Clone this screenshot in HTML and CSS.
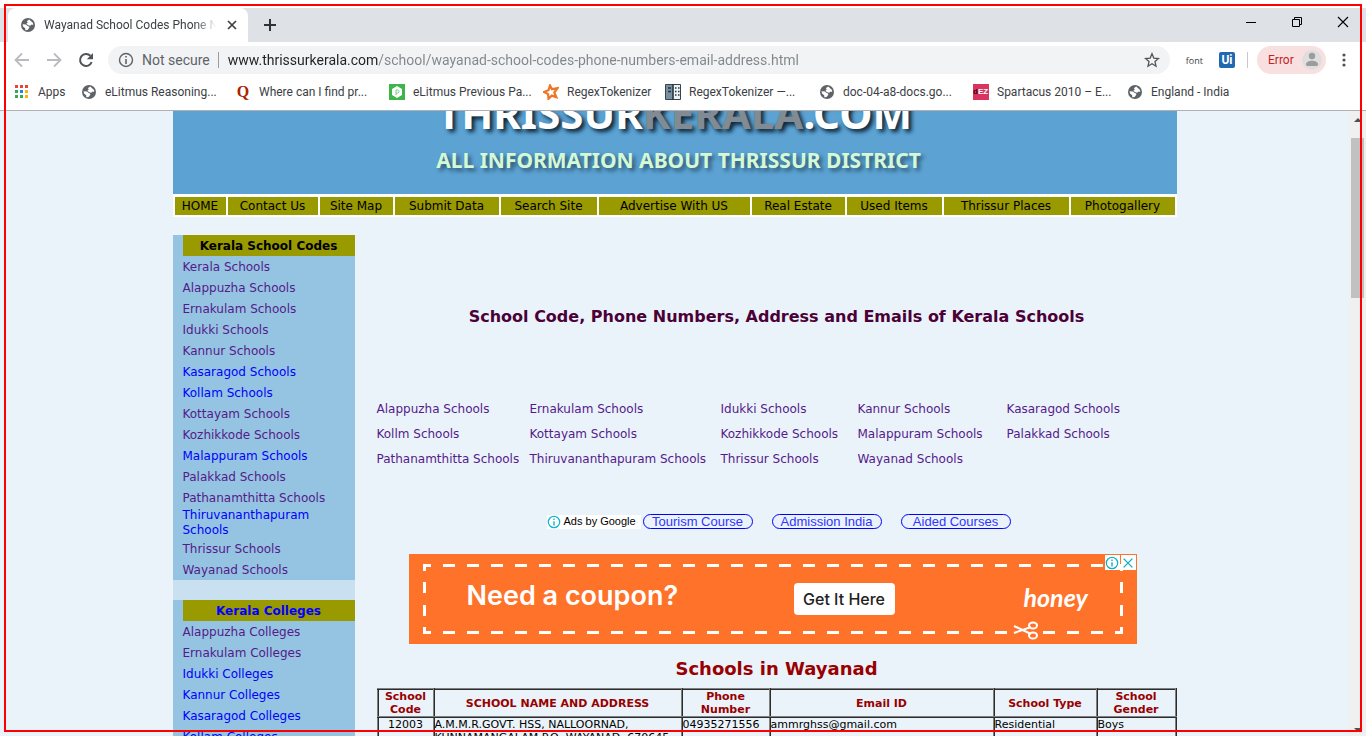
FILE: index.html
```html
<!DOCTYPE html>
<html lang="en">
<head>
<meta charset="utf-8">
<title>Wayanad School Codes Phone Numbers</title>
<link rel="stylesheet" href="styles.css">
</head>
<body>
<svg class="defs" aria-hidden="true">
  <symbol id="globe" viewBox="0 0 16 16"><circle cx="8" cy="8" r="7" fill="#5f6368"/><path d="M9.2 2.6 13 6l.2 2-1.6-.4-1.4 1.2-2-.6L6.400 6.800 7.900 5.300 6.700 4.200zM2.600 7.300l3.400.3 1.700 1.500 1.400.3.200 1.400L7.600 12.900 5.300 13.200 5.200 11.300 3 9.400z" fill="#fff"/></symbol>
  <symbol id="info" viewBox="0 0 16 16"><circle cx="8" cy="8" r="6.500" fill="none" stroke="currentColor" stroke-width="1.400"/><path d="M8 7v5M8 4v1.600" stroke="currentColor" stroke-width="1.600"/></symbol>
</svg>
<div class="window">
  <div class="tabstrip">
    <div class="tab">
      <svg class="icon"><use href="#globe"/></svg>
      <span class="tab-title">Wayanad School Codes Phone Nu</span>
      <button class="plain" aria-label="Close tab"><svg class="icon" viewBox="0 0 16 16"><path d="m4 4 8 8m0-8-8 8" stroke="#3c4043" stroke-width="1.700"/></svg></button>
    </div>
    <button class="plain new-tab" aria-label="New tab"><svg class="icon" viewBox="0 0 16 16"><path d="M8 2v12M2 8h12" stroke="#303336" stroke-width="2"/></svg></button>
    <div class="controls">
      <button class="plain" aria-label="Minimize"><svg class="icon" viewBox="0 0 16 16"><path d="M3 8.500h10" stroke="#000"/></svg></button>
      <button class="plain" aria-label="Restore"><svg class="icon" viewBox="0 0 16 16"><path d="M3.500 5.500h7v7h-7zM5.500 5.500v-2h7v7h-2" fill="none" stroke="#000"/></svg></button>
      <button class="plain" aria-label="Close"><svg class="icon" viewBox="0 0 16 16"><path d="m3 3 10 10m0-10L3 13" stroke="#000" stroke-width="1.100"/></svg></button>
    </div>
  </div>
  <div class="toolbar">
    <button class="plain" aria-label="Back"><svg class="icon" viewBox="0 0 16 16"><path d="M15 8H2m6-6.500L1.500 8 8 14.500" fill="none" stroke="#b9bbbe" stroke-width="1.800"/></svg></button>
    <button class="plain" aria-label="Forward"><svg class="icon" viewBox="0 0 16 16"><path d="M1 8h13M8 1.500 14.500 8 8 14.500" fill="none" stroke="#b9bbbe" stroke-width="1.800"/></svg></button>
    <button class="plain" aria-label="Reload"><svg class="icon" viewBox="0 0 16 16"><path d="M13.700 10A6 6 0 1 1 12.400 3.800" fill="none" stroke="#505357" stroke-width="2"/><path d="M15 1v6.200H8.800z" fill="#505357"/></svg></button>
    <div class="omnibox">
      <svg class="icon"><use href="#info"/></svg>
      <label class="secure" for="url">Not secure</label>
      <input id="url" class="url" type="text" value="www.thrissurkerala.com/school/wayanad-school-codes-phone-numbers-email-address.html">
      <button class="plain" aria-label="Bookmark"><svg class="icon" viewBox="0 0 16 16"><path d="m8 1.800 1.800 4.300 4.700.4-3.500 3.100 1 4.600L8 11.800l-4 2.400 1-4.600L1.500 6.500l4.700-.4z" fill="none" stroke="#505357" stroke-width="1.300"/></svg></button>
    </div>
    <button class="plain ext">font</button>
    <button class="plain ui">Ui</button>
    <span class="rule"></span>
    <button class="plain profile">Error <svg class="avatar" viewBox="0 0 20 20"><circle cx="10" cy="10" r="10" fill="#dedede"/><circle cx="10" cy="6" r="3.200" fill="#9c9c9c"/><path d="M4 14.500c0-5 12-5 12 0 0 1-1 1.500-2 1.500H6c-1 0-2-.5-2-1.500z" fill="#9c9c9c"/></svg></button>
    <button class="plain menu" aria-label="Menu"><svg class="icon" viewBox="0 0 16 16" fill="#505357"><circle cx="8" cy="3" r="1.600"/><circle cx="8" cy="8" r="1.600"/><circle cx="8" cy="13" r="1.600"/></svg></button>
  </div>
  <nav class="bookmarks" aria-label="Bookmarks">
    <a href="#"><svg class="icon" viewBox="0 0 16 16"><path d="M1 1h3v3H1zM6 1h3v3H6zM11 1h3v3h-3z" fill="#ea4335"/><path d="M1 6h3v3H1zM1 11h3v3H1zM6 11h3v3H6z" fill="#34a853"/><path d="M6 6h3v3H6z" fill="#1a83f0"/><path d="M11 6h3v3h-3zM11 11h3v3h-3z" fill="#fbb405"/></svg>Apps</a>
    <a href="#"><svg class="icon"><use href="#globe"/></svg>eLitmus Reasoning...</a>
    <a href="#"><span class="icon quora">Q</span>Where can I find pr...</a>
    <a href="#"><svg class="icon" viewBox="0 0 16 16"><path d="M0 0h16v16H0z" fill="#3cb54a"/><path d="m8 2 5 3v6l-5 3-5-3V5z" fill="#fff"/><path d="M7 11V6h1.500a1.500 1.500 0 0 1 0 3H7" fill="none" stroke="#7ccc84"/></svg>eLitmus Previous Pa...</a>
    <a href="#"><svg class="icon" viewBox="0 0 16 16"><path d="m7 1.500 2 3.700 5.500-1-3.200 4.300 2 4.700-4.500-1.600-3.300 3.200-.4-4.700L1 8l4.500-1.800z" fill="none" stroke="#ee7426" stroke-width="2.200"/></svg>RegexTokenizer</a>
    <a href="#"><svg class="icon" viewBox="0 0 16 16"><path d="M.5.500h15v15H.5z" fill="#788fa1" stroke="#34434f"/><path d="M8 1h7v14H8z" fill="#eef2f4"/><path d="M8 0v16M3 4h3M3 7.500h3M10 4h1.500M13 4h1.500M10 7.500h1.500M13 7.500h1.500M10 11h1.500M13 11h1.500" stroke="#263641" stroke-width="1.600"/></svg>RegexTokenizer —...</a>
    <a href="#"><svg class="icon"><use href="#globe"/></svg>doc-04-a8-docs.go...</a>
    <a href="#"><span class="icon dez"><i>d</i>EZ</span>Spartacus 2010 – E...</a>
    <a href="#"><svg class="icon"><use href="#globe"/></svg>England - India</a>
  </nav>
  <div class="viewport">
    <div class="page">
      <div class="site">
        <header class="masthead">
          <div class="title">THRISSUR<span>KERALA</span>.COM</div>
          <div class="tagline">ALL INFORMATION ABOUT THRISSUR DISTRICT</div>
        </header>
        <nav class="mainnav">
          <a href="#">HOME</a><a href="#">Contact Us</a><a href="#">Site Map</a><a href="#">Submit Data</a><a href="#">Search Site</a><a href="#">Advertise With US</a><a href="#">Real Estate</a><a href="#">Used Items</a><a href="#">Thrissur Places</a><a href="#">Photogallery</a>
        </nav>
        <div class="columns">
          <aside class="sidebar">
            <section>
              <h2>Kerala School Codes</h2>
              <a class="seen" href="#">Kerala Schools</a>
              <a class="seen" href="#">Alappuzha Schools</a>
              <a class="seen" href="#">Ernakulam Schools</a>
              <a class="seen" href="#">Idukki Schools</a>
              <a class="seen" href="#">Kannur Schools</a>
              <a href="#">Kasaragod Schools</a>
              <a href="#">Kollam Schools</a>
              <a class="seen" href="#">Kottayam Schools</a>
              <a class="seen" href="#">Kozhikkode Schools</a>
              <a href="#">Malappuram Schools</a>
              <a class="seen" href="#">Palakkad Schools</a>
              <a class="seen" href="#">Pathanamthitta Schools</a>
              <a class="two" href="#">Thiruvananthapuram<br>Schools</a>
              <a class="seen" href="#">Thrissur Schools</a>
              <a class="seen" href="#">Wayanad Schools</a>
            </section>
            <section>
              <h2 class="blue">Kerala Colleges</h2>
              <a class="seen" href="#">Alappuzha Colleges</a>
              <a class="seen" href="#">Ernakulam Colleges</a>
              <a href="#">Idukki Colleges</a>
              <a href="#">Kannur Colleges</a>
              <a href="#">Kasaragod Colleges</a>
              <a href="#">Kollam Colleges</a>
            </section>
          </aside>
          <main class="main">
            <h1>School Code, Phone Numbers, Address and Emails of Kerala Schools</h1>
            <div class="districts">
              <a href="#">Alappuzha Schools</a><a href="#">Ernakulam Schools</a><a href="#">Idukki Schools</a><a href="#">Kannur Schools</a><a href="#">Kasaragod Schools</a>
              <a href="#">Kollm Schools</a><a href="#">Kottayam Schools</a><a href="#">Kozhikkode Schools</a><a href="#">Malappuram Schools</a><a href="#">Palakkad Schools</a>
              <a href="#">Pathanamthitta Schools</a><a href="#">Thiruvananthapuram Schools</a><a href="#">Thrissur Schools</a><a href="#">Wayanad Schools</a>
            </div>
            <div class="adlinks">
              <span class="adsby"><svg viewBox="0 0 16 16"><use href="#info"/></svg>Ads by Google</span>
              <a href="#">Tourism Course</a><a href="#">Admission India</a><a href="#">Aided Courses</a>
            </div>
            <div class="banner">
              <svg class="dashes" viewBox="0 0 728 90" fill="none" stroke="#fff" stroke-width="3">
                <path d="M34 11.500h670" stroke-dasharray="12"/>
                <path d="M34 78.500h568M634 78.500h70" stroke-dasharray="12"/>
                <path d="M15.500 28v36M712.500 28v36" stroke-dasharray="11 12"/>
                <path d="M22 11.500h-6.500V17M22 78.500h-6.500V73M706 78.500h6.500V73M706 11.500h6.500V17"/>
                <g stroke-width="2"><path d="m605 72 17 8M605 79l17-6"/><ellipse cx="624" cy="71.500" rx="4" ry="3"/><ellipse cx="624" cy="81.500" rx="4" ry="3"/></g>
              </svg>
              <span class="coupon">Need a coupon?</span>
              <button class="plain get">Get It Here</button>
              <span class="honey">honey</span>
              <span class="choices">
                <button class="plain" aria-label="Ad information"><svg viewBox="0 0 16 16"><use href="#info"/></svg></button>
                <button class="plain" aria-label="Close ad"><svg viewBox="0 0 16 16"><path d="m3 3 10 10m0-10L3 13" stroke="currentColor" stroke-width="1.600"/></svg></button>
              </span>
            </div>
            <h2>Schools in Wayanad</h2>
            <table>
              <colgroup><col class="c1"><col class="c2"><col class="c3"><col class="c4"><col class="c5"><col class="c6"></colgroup>
              <thead><tr><th>School Code</th><th>SCHOOL NAME AND ADDRESS</th><th>Phone Number</th><th>Email ID</th><th>School Type</th><th>School Gender</th></tr></thead>
              <tbody><tr><td class="code">12003</td><td>A.M.M.R.GOVT. HSS, NALLOORNAD, KUNNAMANGALAM P.O, WAYANAD, 670645</td><td>04935271556</td><td>ammrghss@gmail.com</td><td>Residential</td><td>Boys</td></tr></tbody>
            </table>
          </main>
        </div>
      </div>
    </div>
    <div class="scrollbar"><span class="up"></span><span class="thumb"></span><span class="down"></span></div>
  </div>
  <div class="outline"></div>
</div>
</body>
</html>
```
FILE: styles.css
```css
* { box-sizing: border-box; }
body { margin: 0; font: 12px/15px "DejaVu Sans", Verdana, sans-serif; color: #000; }
a { text-decoration: none; color: #00f; }
h1, h2 { margin: 0; }
.defs { position: absolute; width: 0; height: 0; }
.plain { border: 0; padding: 0; background: none; font: inherit; color: inherit; display: flex; align-items: center; justify-content: center; }
.icon { width: 16px; height: 16px; flex: none; display: block; }

.window { position: relative; height: 100vh; overflow: hidden; display: flex; flex-direction: column; padding-top: 8px; background: #fff; }
.outline { position: absolute; inset: 4px; border: 2px solid #f00; pointer-events: none; }
.tabstrip, .toolbar, .bookmarks { flex: none; font-family: Roboto, "Open Sans", sans-serif; font-size: 12px; color: #3c4043; display: flex; align-items: center; }

.tabstrip { height: 34px; background: #dee1e6; padding-left: 8px; }
.tab { width: 240px; height: 34px; background: #fff; border-radius: 8px 8px 0 0; display: flex; align-items: center; padding: 0 8px 0 12px; gap: 8px; }
.tab-title { flex: 1; min-width: 0; overflow: hidden; white-space: nowrap; -webkit-mask-image: linear-gradient(to right, #000 88%, transparent); mask-image: linear-gradient(to right, #000 88%, transparent); }
.new-tab { margin-left: 14px; }
.controls { margin-left: auto; display: flex; gap: 30px; padding: 0 15px 6px 0; }

.toolbar { height: 36px; padding: 0 14px; gap: 16px; }
.omnibox { flex: 1; height: 28px; margin-left: -2px; border-radius: 14px; background: #f1f3f4; display: flex; align-items: center; padding: 0 10px; font-size: 14px; color: #5f6368; }
.secure { margin-left: 8px; padding-right: 8px; border-right: 1px solid #9a9da0; line-height: 16px; }
.url { flex: 1; min-width: 0; border: 0; padding: 0 0 0 9px; outline: 0; font: inherit; color: transparent; background: linear-gradient(to right, #202124 159px, #80868b 159px); -webkit-background-clip: text; background-clip: text; }
.ext { font: 9px "Open Sans", sans-serif; }
.ui { width: 16px; height: 16px; border-radius: 2px; background: #2068b0; color: #fff; font-weight: 700; }
.rule { width: 1px; height: 16px; background: #c6c8ca; margin: 0 -7px 0 -4px; }
.profile { width: 69px; height: 28px; border-radius: 14px; background: #f9e0e0; color: #c5221f; padding: 0 4px 0 11px; justify-content: space-between; }
.avatar { width: 20px; height: 20px; }
.menu { margin: 0 0 0 -6px; }

.bookmarks { height: 33px; padding: 0 14px 4px; border-bottom: 1px solid #b0b0b4; display: grid; grid-template-columns: 67px 154px 154px 154px 122px 154px 154px 154px 1fr; }
.bookmarks a { display: flex; align-items: center; gap: 8px; color: #3c4043; white-space: nowrap; }
.quora { font: bold 16px/16px "Liberation Serif", serif; color: #a82400; text-align: center; }
.dez { background: #d9345f; color: #fff; font: bold 8px/16px "Liberation Sans", sans-serif; }
.dez i { font-style: normal; color: #400; }

.viewport { flex: 1; min-height: 0; display: flex; }
.page { flex: 1; min-width: 0; overflow: hidden; background: #eaf3fa; }
.site { max-width: 1004px; margin: 0 auto; }
.masthead { height: 83px; overflow: hidden; background: #5ca3d4; text-align: center; font-family: "Noto Sans", sans-serif; font-weight: 700; white-space: nowrap; }
.title { margin-top: -26px; font-size: 42px; line-height: 56px; color: #fff; text-shadow: 3px 3px 4px #0c2233; }
.title span { color: #808b94; }
.tagline { font-size: 21px; line-height: 38px; color: #d5f8d5; text-shadow: 3px 3px 4px #2a506c; padding-left: 8px; }
.mainnav { background: #fff; padding: 3px 2px 2px; display: grid; gap: 2px; grid-template-columns: 51fr 90fr 73fr 104fr 96fr 151fr 93fr 95fr 125fr 104fr; }
.mainnav a { min-width: 0; background: #990; color: #000; text-align: center; line-height: 18px; white-space: nowrap; }

.columns { margin-top: 18px; display: flex; gap: 22px; }
.sidebar { width: 182px; flex: none; background: #c9e0f0; display: flex; flex-direction: column; gap: 20px; }
.sidebar section { background: #94c4e1; padding-left: 10px; }
.sidebar h2 { background: #990; font-size: 12px; line-height: 19px; padding: 2px 0 0; text-align: center; }
.sidebar .blue { color: #00f; }
.sidebar a { display: block; line-height: 19px; padding-top: 2px; white-space: nowrap; }
.sidebar .two { line-height: 15px; padding: 0; }
.sidebar .seen, .districts a { color: #551a8b; }

.main { flex: 1; min-width: 0; }
.main h1 { font-size: 16px; line-height: 20px; text-align: center; color: #4b0037; padding: 72px 0 70px; }
.districts { display: grid; grid-template-columns: 153px 191px 137px 149px 1fr; line-height: 25px; white-space: nowrap; }
.adlinks { margin-top: 42px; padding-left: 170px; display: flex; align-items: center; gap: 19px; font: 13px/15px "Liberation Sans", Arial, sans-serif; }
.adlinks a { width: 110px; height: 15px; line-height: 13px; border: 1px solid #00f; border-radius: 8px; text-align: center; color: #33f; }
.adsby { background: #fff; display: flex; align-items: center; gap: 3px; width: 94px; height: 14px; font-size: 11px; white-space: nowrap; margin-right: -17px; }
.adsby svg { width: 14px; height: 14px; color: #12b5cb; flex: none; }
.banner { position: relative; max-width: 728px; height: 90px; margin: 25px auto 0 32px; background: #ff7229; color: #fff; display: flex; align-items: center; padding: 0 48px 0 58px; font-family: Inter, sans-serif; }
.dashes { position: absolute; inset: 0; width: 100%; height: 100%; }
.coupon { font-size: 27px; line-height: 32px; font-weight: 600; padding-bottom: 6px; }
.get { width: 101px; height: 32px; margin-left: auto; border-radius: 4px; background: #fff; color: #222; font-size: 16px; font-weight: 500; }
.honey { margin-left: 129px; width: 65px; font: italic 700 25px/28px Lato, cursive; padding-bottom: 4px; }
.choices { position: absolute; top: 1px; right: 1px; display: flex; gap: 1px; color: #12aecb; }
.choices .plain { width: 15px; height: 15px; background: #fff; }
.choices svg { width: 14px; height: 14px; }
.main h2 { font-size: 18px; line-height: 24px; text-align: center; color: #900; padding: 13px 0 7px; }
table { width: 100%; table-layout: fixed; border-collapse: collapse; font-size: 11px; line-height: 13px; }
th, td { border: 2px ridge #808080; padding: 0; }
th { color: #900; }
td { vertical-align: top; }
.code { text-align: center; }
.c1 { width: 56px; } .c2 { width: 248px; } .c3 { width: 88px; } .c4 { width: 224px; } .c5 { width: 103px; } .c6 { width: 79px; }

.scrollbar { width: 17px; flex: none; background: #f0f0f0; padding: 7px 2px 4px; display: flex; flex-direction: column; align-items: center; }
.up, .down { border: 4px solid transparent; }
.up { border-top: 0; border-bottom-color: #505050; }
.down { border-bottom: 0; border-top-color: #505050; margin-top: auto; }
.thumb { width: 13px; height: 26%; margin-top: 16px; background: #c1c1c1; }
```
